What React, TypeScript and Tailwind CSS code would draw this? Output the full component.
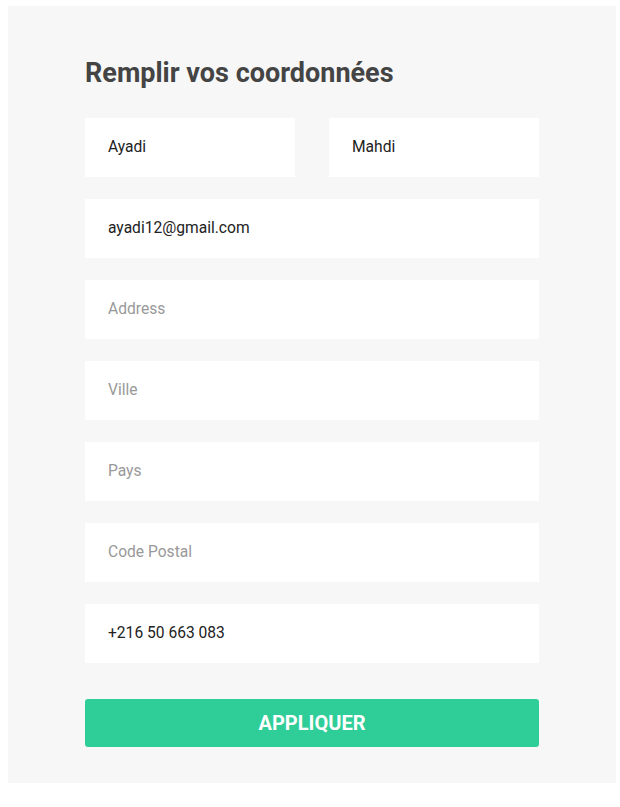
import React from "react";

const inputCls =
  "h-[59px] w-full bg-white px-[23px] pb-[1px] text-[15.6px] text-[#222] placeholder:text-[#999] outline-none border-0";

export default function App() {
  return (
    <div className="min-h-[807px] bg-white pt-[6px]" style={{ fontFamily: "Roboto, 'Noto Sans', sans-serif" }}>
      <div className="mx-[8px] w-[608px] bg-[#f7f7f7] px-[77px] pt-[50px] pb-[36px]">
        <h1 className="text-[27px] font-bold leading-[34px] text-[#444]">Remplir vos coordonnées</h1>
        <form className="mt-[28px] flex flex-col gap-[22px]" onSubmit={(e) => e.preventDefault()}>
          <div className="flex gap-[34px]">
            <input className={inputCls} defaultValue="Ayadi" />
            <input className={inputCls} defaultValue="Mahdi" />
          </div>
          <input className={inputCls} defaultValue="ayadi12@gmail.com" />
          <input className={inputCls} placeholder="Address" />
          <input className={inputCls} placeholder="Ville" />
          <input className={inputCls} placeholder="Pays" />
          <input className={inputCls} placeholder="Code Postal" />
          <input className={inputCls} defaultValue="+216 50 663 083" />
          <button
            type="submit"
            className="mt-[14px] h-[48px] w-full rounded-[3px] bg-[#2fce98] text-[20px] font-bold uppercase text-white"
          >
            Appliquer
          </button>
        </form>
      </div>
    </div>
  );
}
